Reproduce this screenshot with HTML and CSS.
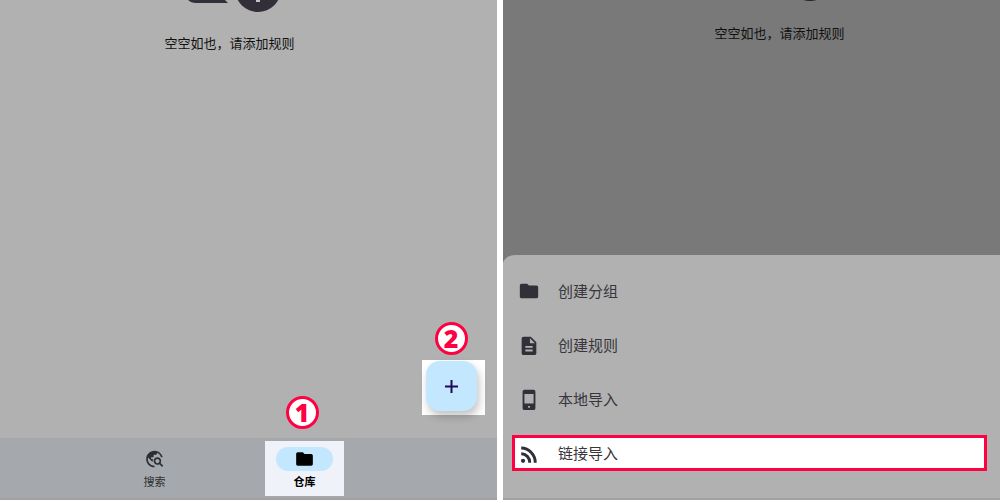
FILE: index.html
```html
<!DOCTYPE html>
<html lang="zh-CN">
<head>
<meta charset="utf-8">
<title>导入规则</title>
<link rel="stylesheet" href="styles.css">
</head>
<body>
<div class="guide">
  <section class="screen">
    <main class="empty">
      <svg class="art" viewBox="0 0 102 12" aria-hidden="true">
        <path d="M9 0H46L49 3H17Q12 3 9 0Z"/>
        <circle cx="79" cy="-11" r="23"/>
        <path class="art-plus" d="M77 0h4v2h-4z"/>
      </svg>
      <p class="empty-text">空空如也，请添加规则</p>
    </main>
    <div class="spot">
      <span class="badge">2</span>
      <button class="fab" type="button" aria-label="添加">
        <svg viewBox="0 0 13 13" aria-hidden="true"><path d="M6.500 0v13M0 6.500h13"/></svg>
      </button>
    </div>
    <nav class="tabs">
      <button class="tab" type="button">
        <span class="pill"><svg class="icon-tab" viewBox="0 0 24 24" aria-hidden="true"><path d="M19.300 16.900c.4-.7.7-1.500.7-2.400 0-2.500-2-4.500-4.500-4.500S11 12 11 14.500s2 4.500 4.500 4.500c.9 0 1.700-.3 2.400-.7l3.200 3.200 1.400-1.400-3.200-3.200zm-3.800.1c-1.400 0-2.500-1.100-2.500-2.500s1.100-2.500 2.500-2.500 2.500 1.100 2.500 2.500-1.100 2.500-2.500 2.500zM12 20v2C6.480 22 2 17.520 2 12S6.480 2 12 2c4.840 0 8.870 3.440 9.800 8h-2.070c-.64-2.460-2.400-4.470-4.730-5.410V5c0 1.100-.9 2-2 2h-2v2c0 .55-.45 1-1 1H8v2h2v3H9l-4.790-4.790C4.080 10.790 4 11.380 4 12c0 4.410 3.590 8 8 8z"/></svg></span>
        <span class="tab-label">搜索</span>
      </button>
      <button class="tab tab-active" type="button">
        <span class="badge">1</span>
        <span class="pill"><svg class="icon-tab" viewBox="0 0 24 24" aria-hidden="true"><path d="M10 4H4c-1.100 0-2 .9-2 2v12c0 1.100.9 2 2 2h16c1.100 0 2-.9 2-2V8c0-1.100-.9-2-2-2h-8z"/></svg></span>
        <span class="tab-label">仓库</span>
      </button>
    </nav>
  </section>

  <section class="screen screen-dim">
    <main class="empty">
      <svg class="art" viewBox="0 0 102 12" aria-hidden="true"><circle cx="81" cy="-22" r="23"/></svg>
      <p class="empty-text">空空如也，请添加规则</p>
    </main>
    <div class="sheet">
      <button class="row" type="button">
        <svg class="icon-row" viewBox="0 0 24 24" aria-hidden="true"><path d="M10 4H4c-1.100 0-2 .9-2 2v12c0 1.100.9 2 2 2h16c1.100 0 2-.9 2-2V8c0-1.100-.9-2-2-2h-8z"/></svg>
        <span>创建分组</span>
      </button>
      <button class="row" type="button">
        <svg class="icon-row" viewBox="0 0 24 24" aria-hidden="true"><path d="M14 3H6c-1.100 0-2 .9-2 2v16c0 1.100.9 2 2 2h12c1.100 0 2-.9 2-2V9zm2 16H8v-2h8zm0-4H8v-2h8zm-3-5V4.500l5.500 5.500z"/></svg>
        <span>创建规则</span>
      </button>
      <button class="row" type="button">
        <svg class="icon-row" viewBox="0 0 24 24" aria-hidden="true"><path fill-rule="evenodd" d="M7 2h10a2 2 0 0 1 2 2v18a2 2 0 0 1-2 2H7a2 2 0 0 1-2-2V4a2 2 0 0 1 2-2zM7 6.500v10.500h10V6.500zM11 19.500h2v2h-2z"/></svg>
        <span>本地导入</span>
      </button>
      <button class="row row-marked" type="button">
        <svg class="icon-row" viewBox="0 0 24 24" aria-hidden="true"><circle cx="5.500" cy="20.500" r="2.300"/><path d="M3.500 5v3.200A14.300 14.300 0 0 1 17.200 22.500h3.200A17.200 17.200 0 0 0 3.500 5zM3.500 11.200v3.200a8 8 0 0 1 7.700 8.100h3.200A11 11 0 0 0 3.500 11.200z"/></svg>
        <span>链接导入</span>
      </button>
    </div>
  </section>
</div>
</body>
</html>
```
FILE: styles.css
```css
* {
  box-sizing: border-box;
}

body {
  margin: 0;
  background: #fff;
  font-family: "Noto Sans CJK SC", sans-serif;
}

button {
  margin: 0;
  padding: 0;
  border: 0;
  background: none;
  color: inherit;
  font: inherit;
}

.guide {
  display: grid;
  grid-template-columns: 1fr 1fr;
  gap: 6px;
  min-height: 100vh;
}

.screen {
  position: relative;
  display: flex;
  flex-direction: column;
  background: #b1b1b1;
  border-bottom: 2px solid #a1a1a2;
}

.screen-dim {
  background: #797979;
}

.empty {
  flex: 1;
  display: flex;
  flex-direction: column;
  align-items: center;
  gap: 20px;
  padding-right: 38px;
}

.screen-dim .empty {
  gap: 10px;
  padding: 0 0 0 56px;
}

.art {
  width: 102px;
  height: 12px;
  fill: #322f38;
}

.art-plus {
  fill: #c4c4c4;
}

.screen-dim .art {
  fill: #242229;
}

.empty-text {
  margin: 0;
  color: #111;
  font-size: 13px;
  line-height: 22px;
}

.spot {
  position: absolute;
  right: 12px;
  bottom: 83px;
  width: 63px;
  height: 55px;
  padding: 1px 4px;
  background: #fff;
}

.fab {
  display: grid;
  place-items: center;
  width: 51px;
  height: 50px;
  border-radius: 14px;
  background: #c2e7ff;
  box-shadow: 2px 5px 8px rgba(0, 0, 0, 0.24);
}

.fab svg {
  width: 13px;
  height: 13px;
  fill: none;
  stroke: #1f0a58;
  stroke-width: 2;
}

.badge {
  position: absolute;
  bottom: 100%;
  left: 50%;
  width: 33px;
  height: 33px;
  border: 3px solid #ff0043;
  border-radius: 50%;
  background: #fff;
  color: #ff0043;
  font-family: "Noto Sans", sans-serif;
  font-size: 25px;
  font-weight: 900;
  line-height: 26px;
  text-align: center;
}

.spot .badge {
  margin: 0 0 5px -19px;
}

.tab .badge {
  margin: 0 0 12px -19px;
}

.tabs {
  display: flex;
  justify-content: center;
  gap: 71px;
  padding: 3px 38px 2px 0;
  background: #a5a8ac;
}

.tab {
  position: relative;
  display: flex;
  flex-direction: column;
  align-items: center;
  width: 79px;
  height: 55px;
  padding-top: 6px;
  color: #2c2f31;
  font-size: 11px;
  line-height: 20px;
}

.tab-active {
  background: #eff3f9;
  color: #000;
  font-weight: 700;
}

.pill {
  display: grid;
  place-items: center;
  width: 57px;
  height: 24px;
  border-radius: 12px;
}

.tab-active .pill {
  background: #c2e7ff;
}

.icon-tab {
  width: 21px;
  height: 20px;
  fill: currentColor;
}

.sheet {
  display: flex;
  flex-direction: column;
  gap: 18px;
  padding: 18px 13px 27px 9px;
  border-top-left-radius: 12px 9px;
  background: #b1b1b1;
}

.row {
  display: flex;
  align-items: center;
  gap: 18px;
  height: 36px;
  padding-left: 3px;
  border: 3px solid transparent;
  color: #38363c;
  font-size: 15px;
  line-height: 22px;
}

.row-marked {
  border-color: #ff0043;
  background: #fff;
}

.icon-row {
  width: 22px;
  height: 22px;
  fill: #322f38;
}
```
